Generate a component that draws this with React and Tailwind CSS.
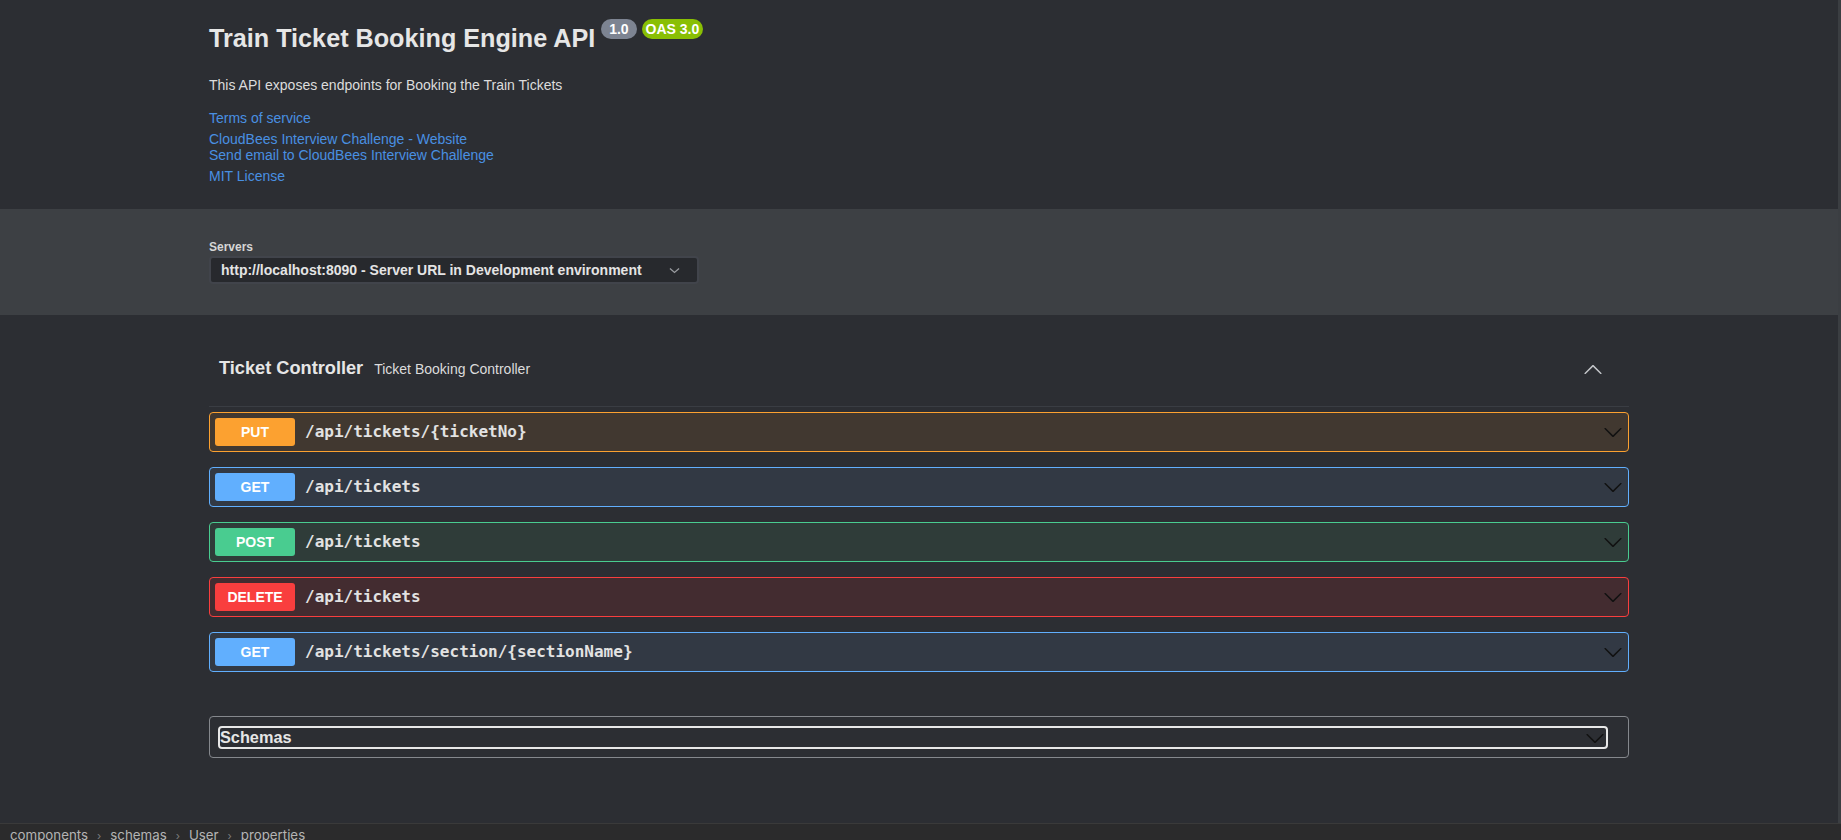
import React from 'react';

const ops = [
    { method: 'PUT', path: '/api/tickets/{ticketNo}', badge: 'bg-[#fca130]', border: 'border-[#fca130]', bg: 'bg-[#413830]' },
    { method: 'GET', path: '/api/tickets', badge: 'bg-[#61affe]', border: 'border-[#61affe]', bg: 'bg-[#323944]' },
    { method: 'POST', path: '/api/tickets', badge: 'bg-[#49cc90]', border: 'border-[#49cc90]', bg: 'bg-[#2f3c39]' },
    { method: 'DELETE', path: '/api/tickets', badge: 'bg-[#f93e3e]', border: 'border-[#f93e3e]', bg: 'bg-[#432c30]' },
    { method: 'GET', path: '/api/tickets/section/{sectionName}', badge: 'bg-[#61affe]', border: 'border-[#61affe]', bg: 'bg-[#323944]' },
];

const ArrowDown = ({ className }) => (
    <svg viewBox="0 0 20 20" width="20" height="20" className={className}>
        <path
            fill="currentColor"
            d="M17.418 6.109c.272-.268.709-.268.979 0s.271.701 0 .969l-7.908 7.83c-.27.268-.707.268-.979 0l-7.908-7.83c-.27-.268-.27-.701 0-.969.271-.268.709-.268.979 0L10 13.25l7.418-7.141z"
        />
    </svg>
);

const ArrowUp = ({ className }) => (
    <svg viewBox="0 0 20 20" width="20" height="20" className={className}>
        <path
            fill="currentColor"
            d="M17.418 14.908c.272.268.709.268.979 0s.271-.701 0-.969l-7.908-7.83c-.27-.268-.707-.268-.979 0l-7.908 7.83c-.27.268-.27.701 0 .969.271.268.709.268.979 0L10 7.75l7.418 7.158z"
        />
    </svg>
);

const OpBlock = ({ op }) => (
    <div className={`flex items-center h-[40px] border ${op.border} ${op.bg} rounded-[4px] px-[5px]`}>
        <span className={`${op.badge} w-[80px] h-[28px] rounded-[3px] flex items-center justify-center text-white text-[14px] font-bold`}>
            {op.method}
        </span>
        <span className="ml-[10px] font-['DejaVu_Sans_Mono',monospace] font-bold text-[16px] text-[#e2e2e2]">
            {op.path}
        </span>
        <ArrowDown className="ml-auto text-[#111111]" />
    </div>
);

export default function App() {
    return (
        <div className="h-[840px] overflow-hidden flex flex-col bg-[#2c2e33] font-['Liberation_Sans',Arial,sans-serif]">
            <div className="flex h-[823px] shrink-0">
                <div className="flex-1 flex flex-col">
                    {/* Info */}
                    <div className="max-w-[1460px] w-full mx-auto px-5 pt-[21px] pb-[25px]">
                        <div className="flex items-start h-[34px]">
                            <h1 className="text-[25.2px] leading-[34px] font-bold text-[#e6e6e6]">Train Ticket Booking Engine API</h1>
                            <span className="ml-[6px] mt-[-2px] px-[4px] py-[2px] rounded-full bg-[#7d8492] text-white text-[14px] leading-[16px] font-bold whitespace-pre">{' 1.0 '}</span>
                            <span className="ml-[5px] mt-[-2px] px-[4px] py-[2px] rounded-full bg-[#89bf04] text-white text-[14px] leading-[16px] font-bold">OAS 3.0</span>
                        </div>
                        <p className="mt-[22px] text-[14px] leading-[16px] text-[#dcdcdc]">This API exposes endpoints for Booking the Train Tickets</p>
                        <div className="mt-[17px] text-[14px] leading-[16px] text-[#4990e2]">Terms of service</div>
                        <div className="mt-[5px] text-[14px] leading-[16px] text-[#4990e2]">
                            <div>CloudBees Interview Challenge - Website</div>
                            <div>Send email to CloudBees Interview Challenge</div>
                        </div>
                        <div className="mt-[5px] text-[14px] leading-[16px] text-[#4990e2]">MIT License</div>
                    </div>

                    {/* Servers */}
                    <div className="bg-[#3d4044] pt-[31px] pb-[31px]">
                        <div className="max-w-[1460px] w-full mx-auto px-5">
                            <div className="text-[12px] leading-[15px] font-bold text-[#d6d6d6]">Servers</div>
                            <div className="mt-[1px] w-[490px] h-[28px] flex items-center border-2 border-[#41444b] bg-[#27292d] rounded-[4px] pl-[10px] pr-[16px]">
                                <span className="text-[14px] font-bold text-[#e4e4e4]">http://localhost:8090 - Server URL in Development environment</span>
                                <svg viewBox="0 0 20 20" width="13" height="13" className="ml-auto text-[#9a9ca0]">
                                    <path fill="none" stroke="currentColor" strokeWidth="2" d="M3 7l7 6 7-6" />
                                </svg>
                            </div>
                        </div>
                    </div>

                    {/* Operations */}
                    <div className="max-w-[1460px] w-full mx-auto px-5 pt-[17px]">
                        <div className="flex items-center h-[75px] border-b border-[#3a3d43] pl-[10px] pr-[26px]">
                            <span className="text-[18.2px] font-bold text-[#e6e6e6]">Ticket Controller</span>
                            <span className="ml-[11px] text-[14px] text-[#dcdcdc]">Ticket Booking Controller</span>
                            <ArrowUp className="ml-auto text-[#c4c6ca]" />
                        </div>
                        <div className="mt-[5px] flex flex-col gap-[15px]">
                            {ops.map((op, i) => (
                                <OpBlock key={i} op={op} />
                            ))}
                        </div>

                        {/* Schemas */}
                        <div className="mt-[44px] border border-[#85888d] rounded-[4px] pt-[9px] pb-[8px] pl-[8px] pr-[20px]">
                            <div className="h-[23px] flex items-center border-2 border-[#e8e8e8] rounded-[4px] bg-[#2c2e33]">
                                <span className="text-[16.3px] font-bold text-[#e6e6e6]">Schemas</span>
                                <ArrowDown className="ml-auto mr-[1px] text-[#111111]" />
                            </div>
                        </div>
                    </div>
                </div>
                <div className="w-[3px] bg-[#3b3e42]" />
            </div>

            {/* Breadcrumb bar */}
            <div className="h-[22px] shrink-0 border-t border-[#3a3a3a] bg-[#2b2b2c] flex items-center pt-[3px] pl-[10px] font-['Inter',sans-serif] text-[13.3px] text-[#b4b4b4]">
                <span>components</span>
                <span className="mx-[9px] text-[#7d7d7d] text-[11px]">›</span>
                <span>schemas</span>
                <span className="mx-[9px] text-[#7d7d7d] text-[11px]">›</span>
                <span>User</span>
                <span className="mx-[9px] text-[#7d7d7d] text-[11px]">›</span>
                <span>properties</span>
            </div>
        </div>
    );
}
